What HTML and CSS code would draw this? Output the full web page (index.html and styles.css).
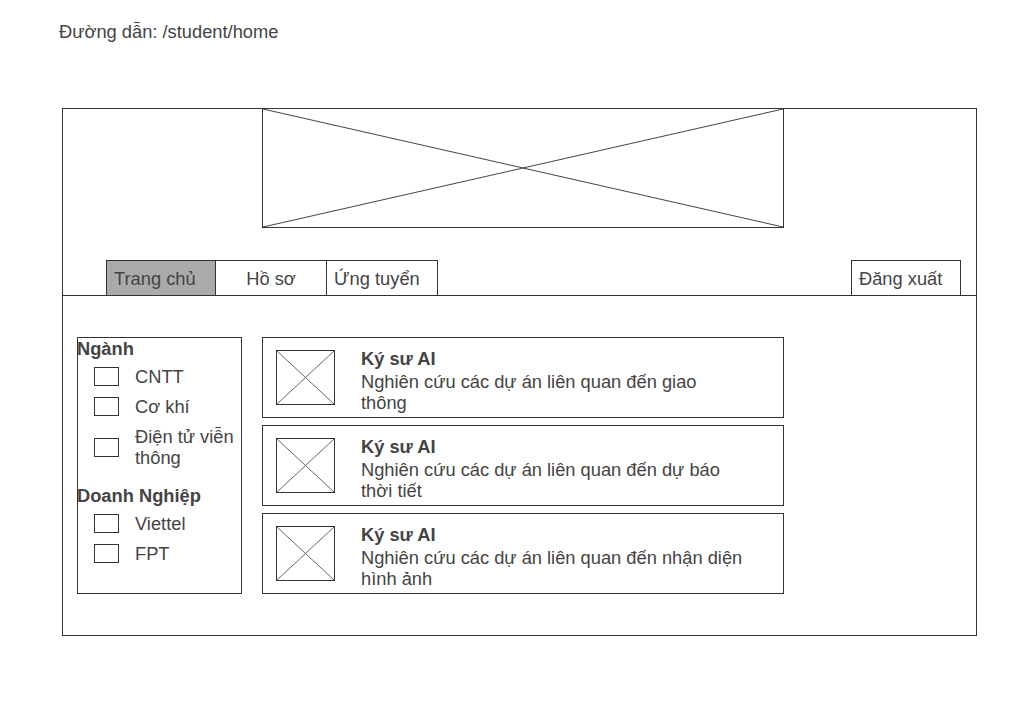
FILE: index.html
```html
<!DOCTYPE html>
<html lang="vi">
<head>
  <meta charset="UTF-8">
  <title>Student Home</title>
  <link rel="stylesheet" href="styles.css">
</head>
<body>

  <div class="path">Đường dẫn: /student/home</div>

  <div class="frame">
    <div class="header">
      <svg class="banner" viewBox="0 0 100 100" preserveAspectRatio="none">
        <line x1="0" y1="0" x2="100" y2="100" vector-effect="non-scaling-stroke"/>
        <line x1="100" y1="0" x2="0" y2="100" vector-effect="non-scaling-stroke"/>
      </svg>
      <div class="nav">
        <div class="tabs">
          <div class="tab active">Trang chủ</div>
          <div class="tab center">Hồ sơ</div>
          <div class="tab">Ứng tuyển</div>
        </div>
        <div class="tab logout">Đăng xuất</div>
      </div>
    </div>

    <div class="content">
      <div class="filters">
        <div class="group">
          <div class="group-title">Ngành</div>
          <label class="check"><span class="box"></span><span class="label">CNTT</span></label>
          <label class="check"><span class="box"></span><span class="label">Cơ khí</span></label>
          <label class="check"><span class="box"></span><span class="label">Điện tử viễn thông</span></label>
        </div>
        <div class="group">
          <div class="group-title">Doanh Nghiệp</div>
          <label class="check"><span class="box"></span><span class="label">Viettel</span></label>
          <label class="check"><span class="box"></span><span class="label">FPT</span></label>
        </div>
      </div>

      <div class="jobs" id="jobs"></div>
    </div>
  </div>

  <script>
    const jobs = [
      { title: "Ký sư AI", desc: "Nghiên cứu các dự án liên quan đến giao thông" },
      { title: "Ký sư AI", desc: "Nghiên cứu các dự án liên quan đến dự báo thời tiết" },
      { title: "Ký sư AI", desc: "Nghiên cứu các dự án liên quan đến nhận diện hình ảnh" }
    ];

    const jobsContainer = document.getElementById("jobs");

    jobs.forEach((job) => {
      const card = document.createElement("div");
      card.classList.add("job");
      card.innerHTML = `
        <svg class="thumb" viewBox="0 0 100 100" preserveAspectRatio="none">
          <line x1="0" y1="0" x2="100" y2="100" vector-effect="non-scaling-stroke"/>
          <line x1="100" y1="0" x2="0" y2="100" vector-effect="non-scaling-stroke"/>
        </svg>
        <div class="job-text">
          <div class="job-title">${job.title}</div>
          <div class="job-desc">${job.desc}</div>
        </div>
      `;
      jobsContainer.appendChild(card);
    });
  </script>
</body>
</html>
```

FILE: styles.css
```css
body {
  margin: 0;
  font-family: 'Liberation Sans', Arial, sans-serif;
  font-size: 18.3px;
  line-height: 21px;
  color: #444;
  background: #fff;
}

.path {
  padding: 21px 0 0 59px;
}

.frame {
  width: 913px;
  height: 526px;
  margin: 66px 0 0 62px;
  border: 1px solid #333;
}

.header {
  display: flex;
  flex-direction: column;
  border-bottom: 1px solid #333;
}

.banner {
  display: block;
  width: 520px;
  height: 118px;
  margin: -1px 0 0 199px;
  border: 1px solid #333;
}

.banner line {
  stroke: #444;
  stroke-width: 1;
}

.thumb line {
  stroke: #666;
  stroke-width: 1;
}

.nav {
  display: flex;
  justify-content: space-between;
  align-items: flex-end;
  margin-top: 32px;
  padding: 0 15px 0 43px;
}

.tabs {
  display: flex;
}

.tab {
  width: 110px;
  height: 35px;
  box-sizing: border-box;
  padding-left: 7px;
  border: 1px solid #333;
  border-bottom: none;
  line-height: 35px;
}

.tabs .tab + .tab {
  width: 112px;
  margin-left: -1px;
}

.tab.active {
  background: #aaa;
}

.tab.center {
  padding-left: 0;
  text-align: center;
}

.logout {
  width: 110px;
}

.content {
  display: flex;
  align-items: flex-start;
  gap: 20px;
  padding: 41px 0 0 14px;
}

.filters {
  width: 163px;
  height: 255px;
  border: 1px solid #333;
}

.group {
  display: flex;
  flex-direction: column;
  gap: 9px;
  margin-bottom: 17px;
}

.group-title {
  font-weight: bold;
  margin: 0 0 -2px -1px;
}

.check {
  display: flex;
  align-items: center;
  padding-left: 16px;
}

.box {
  width: 23px;
  height: 17px;
  border: 1px solid #333;
  flex-shrink: 0;
}

.label {
  width: 104px;
  margin-left: 16px;
}

.jobs {
  display: flex;
  flex-direction: column;
  gap: 7px;
}

.job {
  display: flex;
  width: 520px;
  height: 79px;
  border: 1px solid #333;
}

.thumb {
  width: 57px;
  height: 53px;
  margin: 12px 0 0 13px;
  border: 1px solid #333;
  flex-shrink: 0;
}

.job-text {
  margin: 10px 0 0 26px;
  width: 386px;
}

.job-title {
  font-weight: bold;
  margin-bottom: 2px;
}
```
